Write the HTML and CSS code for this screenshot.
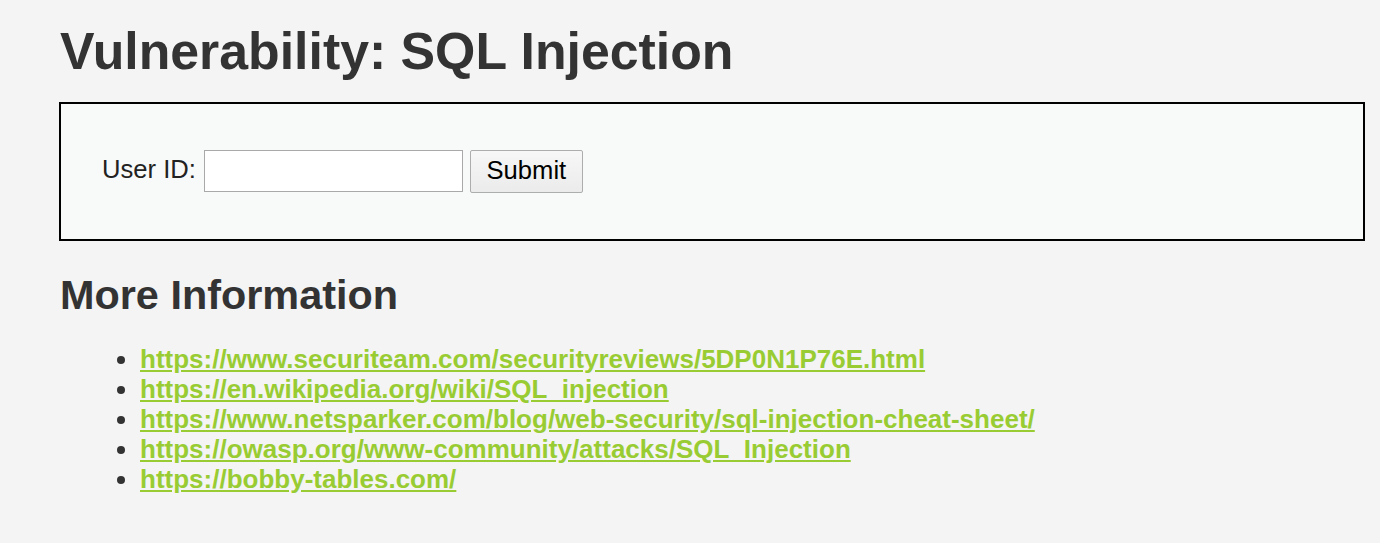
FILE: index.html
```html
<!DOCTYPE html>
<html>
<head>
<meta charset="utf-8">
<title>Vulnerability: SQL Injection</title>
<link rel="stylesheet" href="styles.css">
</head>
<body>
<div class="body-padded">
  <h1 class="title">Vulnerability: SQL Injection</h1>
  <div class="vulnerable-code-area">
    <form class="id-form" action="#" method="GET">
      <label class="id-label" for="uid">User ID:</label>
      <input class="id-input" id="uid" type="text" name="id">
      <button class="id-submit" type="button">Submit</button>
    </form>
  </div>
  <h2 class="more-title">More Information</h2>
  <ul class="links">
    <li><a href="#">https://www.securiteam.com/securityreviews/5DP0N1P76E.html</a></li>
    <li><a href="#">https://en.wikipedia.org/wiki/SQL_injection</a></li>
    <li><a href="#">https://www.netsparker.com/blog/web-security/sql-injection-cheat-sheet/</a></li>
    <li><a href="#">https://owasp.org/www-community/attacks/SQL_Injection</a></li>
    <li><a href="#">https://bobby-tables.com/</a></li>
  </ul>
</div>
</body>
</html>
```
FILE: styles.css
```css
html, body {
  margin: 0;
  padding: 0;
  background: #f4f4f4;
}
body {
  font-family: "Liberation Sans", Arial, sans-serif;
  color: #333333;
  font-size: 25.6px;
}
.body-padded {
  padding: 0 15px 0 59px;
  overflow: hidden;
}
.title {
  margin: 22px 0 22px 1px;
  font-size: 51.8px;
  line-height: 58px;
  font-weight: bold;
  color: #333333;
}
.vulnerable-code-area {
  box-sizing: border-box;
  width: 1306px;
  height: 139px;
  border: 2px solid #000000;
  background: #f8f9f9;
  padding: 46px 0 0 41px;
}
.id-form {
  display: flex;
  align-items: flex-start;
  margin: 0;
}
.id-label {
  font-size: 25.6px;
  line-height: 30px;
  padding-top: 4px;
  color: #222222;
  margin-right: 8px;
}
.id-input {
  box-sizing: border-box;
  width: 259px;
  height: 42px;
  margin: 0 7px 0 0;
  border: 1px solid #a9a9a9;
  background: #ffffff;
  padding: 0 4px;
  font-family: "Liberation Sans", Arial, sans-serif;
  font-size: 25.6px;
}
.id-submit {
  box-sizing: border-box;
  width: 113px;
  height: 43px;
  margin: 0;
  padding: 3px 0 7px 0;
  border: 1px solid #adadad;
  border-radius: 2px;
  background: linear-gradient(#f7f7f7, #ebebeb);
  font-family: "Liberation Sans", Arial, sans-serif;
  font-size: 25.6px;
  line-height: 30px;
  color: #000000;
}
.more-title {
  margin: 30px 0 0 1px;
  font-size: 41.4px;
  line-height: 48px;
  font-weight: bold;
  color: #333333;
}
.links {
  margin: 25px 0 0 0;
  padding-left: 81px;
  list-style: disc;
}
.links li {
  font-size: 26px;
  line-height: 30px;
  color: #333333;
}
.links a {
  color: #99cc33;
  font-weight: bold;
  text-decoration: underline;
}
```
